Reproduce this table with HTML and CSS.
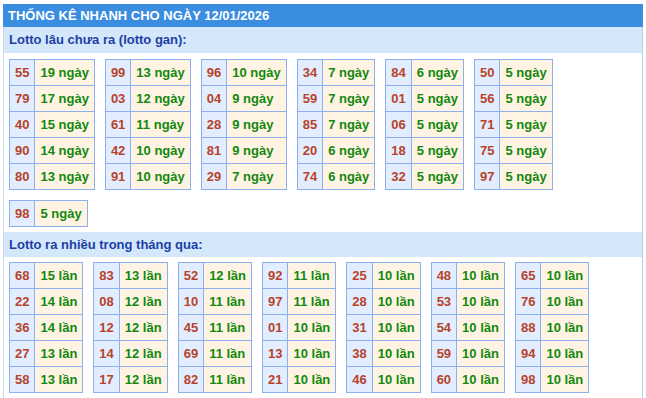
FILE: index.html
```html
<!DOCTYPE html>
<html lang="vi">
<head>
<meta charset="utf-8">
<title>Thống kê nhanh</title>
<link rel="stylesheet" href="styles.css">
</head>
<body>
<div class="box">
  <div class="title">THỐNG KÊ NHANH CHO NGÀY 12/01/2026</div>
  <div class="sec">Lotto lâu chưa ra (lotto gan):</div>
  <div class="grid">
    <table class="t"><tr><td class="n">55</td><td class="v">19 ngày</td></tr><tr><td class="n">79</td><td class="v">17 ngày</td></tr><tr><td class="n">40</td><td class="v">15 ngày</td></tr><tr><td class="n">90</td><td class="v">14 ngày</td></tr><tr><td class="n">80</td><td class="v">13 ngày</td></tr></table>
    <table class="t"><tr><td class="n">99</td><td class="v">13 ngày</td></tr><tr><td class="n">03</td><td class="v">12 ngày</td></tr><tr><td class="n">61</td><td class="v">11 ngày</td></tr><tr><td class="n">42</td><td class="v">10 ngày</td></tr><tr><td class="n">91</td><td class="v">10 ngày</td></tr></table>
    <table class="t"><tr><td class="n">96</td><td class="v">10 ngày</td></tr><tr><td class="n">04</td><td class="v">9 ngày</td></tr><tr><td class="n">28</td><td class="v">9 ngày</td></tr><tr><td class="n">81</td><td class="v">9 ngày</td></tr><tr><td class="n">29</td><td class="v">7 ngày</td></tr></table>
    <table class="t"><tr><td class="n">34</td><td class="v">7 ngày</td></tr><tr><td class="n">59</td><td class="v">7 ngày</td></tr><tr><td class="n">85</td><td class="v">7 ngày</td></tr><tr><td class="n">20</td><td class="v">6 ngày</td></tr><tr><td class="n">74</td><td class="v">6 ngày</td></tr></table>
    <table class="t"><tr><td class="n">84</td><td class="v">6 ngày</td></tr><tr><td class="n">01</td><td class="v">5 ngày</td></tr><tr><td class="n">06</td><td class="v">5 ngày</td></tr><tr><td class="n">18</td><td class="v">5 ngày</td></tr><tr><td class="n">32</td><td class="v">5 ngày</td></tr></table>
    <table class="t"><tr><td class="n">50</td><td class="v">5 ngày</td></tr><tr><td class="n">56</td><td class="v">5 ngày</td></tr><tr><td class="n">71</td><td class="v">5 ngày</td></tr><tr><td class="n">75</td><td class="v">5 ngày</td></tr><tr><td class="n">97</td><td class="v">5 ngày</td></tr></table>
    <table class="t"><tr><td class="n">98</td><td class="v">5 ngày</td></tr></table>
  </div>
  <div class="sec sec2">Lotto ra nhiều trong tháng qua:</div>
  <div class="grid grid2">
    <table class="t"><tr><td class="n">68</td><td class="v">15 lần</td></tr><tr><td class="n">22</td><td class="v">14 lần</td></tr><tr><td class="n">36</td><td class="v">14 lần</td></tr><tr><td class="n">27</td><td class="v">13 lần</td></tr><tr><td class="n">58</td><td class="v">13 lần</td></tr></table>
    <table class="t"><tr><td class="n">83</td><td class="v">13 lần</td></tr><tr><td class="n">08</td><td class="v">12 lần</td></tr><tr><td class="n">12</td><td class="v">12 lần</td></tr><tr><td class="n">14</td><td class="v">12 lần</td></tr><tr><td class="n">17</td><td class="v">12 lần</td></tr></table>
    <table class="t"><tr><td class="n">52</td><td class="v">12 lần</td></tr><tr><td class="n">10</td><td class="v">11 lần</td></tr><tr><td class="n">45</td><td class="v">11 lần</td></tr><tr><td class="n">69</td><td class="v">11 lần</td></tr><tr><td class="n">82</td><td class="v">11 lần</td></tr></table>
    <table class="t"><tr><td class="n">92</td><td class="v">11 lần</td></tr><tr><td class="n">97</td><td class="v">11 lần</td></tr><tr><td class="n">01</td><td class="v">10 lần</td></tr><tr><td class="n">13</td><td class="v">10 lần</td></tr><tr><td class="n">21</td><td class="v">10 lần</td></tr></table>
    <table class="t"><tr><td class="n">25</td><td class="v">10 lần</td></tr><tr><td class="n">28</td><td class="v">10 lần</td></tr><tr><td class="n">31</td><td class="v">10 lần</td></tr><tr><td class="n">38</td><td class="v">10 lần</td></tr><tr><td class="n">46</td><td class="v">10 lần</td></tr></table>
    <table class="t"><tr><td class="n">48</td><td class="v">10 lần</td></tr><tr><td class="n">53</td><td class="v">10 lần</td></tr><tr><td class="n">54</td><td class="v">10 lần</td></tr><tr><td class="n">59</td><td class="v">10 lần</td></tr><tr><td class="n">60</td><td class="v">10 lần</td></tr></table>
    <table class="t"><tr><td class="n">65</td><td class="v">10 lần</td></tr><tr><td class="n">76</td><td class="v">10 lần</td></tr><tr><td class="n">88</td><td class="v">10 lần</td></tr><tr><td class="n">94</td><td class="v">10 lần</td></tr><tr><td class="n">98</td><td class="v">10 lần</td></tr></table>
  </div>
</div>
</body>
</html>
```

FILE: styles.css
```css
html, body {
  margin: 0;
  padding: 0;
  background: #ffffff;
  overflow: hidden;
}

body {
  font-family: "Liberation Sans", Arial, sans-serif;
  font-size: 13px;
}

.box {
  margin: 4px 3px 0 3px;
  border-left: 1px solid #c9d8ea;
  border-right: 1px solid #b9cce2;
  min-height: 400px;
}

.title {
  margin: 0 -1px;
  height: 23px;
  line-height: 23px;
  padding: 0 5px;
  background: #3b8de0;
  color: #ffffff;
  font-weight: bold;
  font-size: 13px;
}

.sec {
  height: 26px;
  line-height: 26px;
  padding: 0 5px;
  background: #d5e7fb;
  color: #1c3fa6;
  font-weight: bold;
  font-size: 13px;
}

.sec2 {
  height: 25px;
  line-height: 25px;
}

.grid {
  display: flex;
  flex-wrap: wrap;
  align-items: flex-start;
  column-gap: 10px;
  row-gap: 10px;
  padding: 6px 5px 5px 5px;
}

.grid2 {
  padding-top: 5px;
}

.t {
  border-collapse: collapse;
  border: 1px solid #8cb0ee;
}

.t td {
  border: 1px solid #8cb0ee;
  padding: 5px 5px;
  line-height: 15px;
  font-weight: bold;
  white-space: nowrap;
}

.n {
  background: #e2eeff;
  color: #b7422a;
}

.v {
  background: #fff4e3;
  color: #12880f;
}
```
